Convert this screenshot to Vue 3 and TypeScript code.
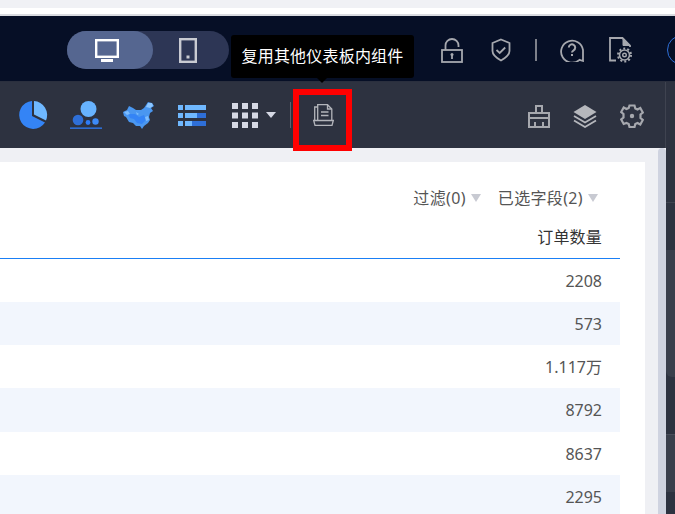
<script setup lang="ts">
const rows: string[] = ['2208', '573', '1.117万', '8792', '8637', '2295']
</script>

<template>
  <div class="page">
    <div class="strip"></div>
    <div class="white"></div>
    <div class="grey"></div>

    <header class="header">
      <div class="toggle">
        <div class="seg active">
          <svg width="24" height="23" viewBox="0 0 24 23"><rect x="1.2" y="1.2" width="21.6" height="16.6" fill="none" stroke="#fff" stroke-width="2.4"/><rect x="6" y="20" width="12" height="3" fill="#fff"/></svg>
        </div>
        <div class="seg">
          <svg width="18" height="25" viewBox="0 0 18 25"><rect x="1.2" y="1.2" width="15.6" height="22.6" fill="none" stroke="#c9cbd2" stroke-width="2.4"/><rect x="7.5" y="17.5" width="3" height="3" fill="#c9cbd2"/></svg>
        </div>
      </div>
      <div class="head-icons">
        <svg class="h-lock" width="22" height="25" viewBox="0 0 22 25" fill="none" stroke="#a6a8ae" stroke-width="1.8"><path d="M4.5 12V7.500a6.500 6.500 0 0 1 13 0V9"/><rect x="1" y="12" width="20" height="12"/><path d="M11 16v5" stroke-width="1.800"/><circle cx="11" cy="16.500" r="1.500" fill="#a6a8ae" stroke="none"/></svg>
        <svg class="h-shield" width="20" height="24" viewBox="0 0 20 24" fill="none" stroke="#a6a8ae" stroke-width="1.8"><path d="M10 1.500l8.500 3.500v8c0 4-4 7-8.500 9.500C5.500 20 1.500 17 1.500 13V5z"/><path d="M5.500 12l3.200 3 5.500-5.500"/></svg>
        <span class="h-div"></span>
        <svg class="h-help" width="24" height="24" viewBox="0 0 24 24" fill="none" stroke="#a6a8ae" stroke-width="1.8"><path d="M23 23l-3.500-1.200A11 11 0 1 1 23 12z"/><path d="M8.800 9.500a3.200 3.200 0 1 1 4.800 2.800c-1 .6-1.600 1-1.600 2.200" stroke-width="2"/><rect x="11" y="16" width="2" height="2" fill="#a6a8ae" stroke="none"/></svg>
        <svg class="h-doc" width="24" height="26" viewBox="0 0 24 26" fill="none" stroke="#a6a8ae" stroke-width="1.8"><path d="M7 23.500H1V1h12.500L21 8.500V10"/><path d="M14 2v6.500h6.500" fill="#a6a8ae" stroke-width="1"/><circle cx="15.500" cy="18" r="5" stroke-width="1.600"/><circle cx="15.500" cy="18" r="6.500" stroke-width="2" stroke-dasharray="2 2.080"/><circle cx="15.500" cy="18" r="1.800" stroke-width="1.400"/></svg>
      </div>
      <span class="avatar"></span>
    </header>

    <div class="toolbar">
      <svg class="t-pie" width="30" height="30" viewBox="0 0 30 30">
        <path d="M14 1A14 14 0 1 0 27 22.500L14 16z" fill="#3484f6"/>
        <path d="M16 1A14 14 0 0 1 28 20.500L16 14.500z" fill="#6fb8ff"/>
      </svg>
      <svg class="t-bubble" width="32" height="30" viewBox="0 0 32 30">
        <circle cx="18.500" cy="9" r="8" fill="#67b3ff"/>
        <circle cx="8" cy="20" r="5.300" fill="#2e6fd8"/>
        <circle cx="18" cy="22.500" r="2.400" fill="#2e7cf6"/>
        <circle cx="25.500" cy="21.500" r="3.200" fill="#3d8bf8"/>
        <rect x="0" y="27.500" width="32" height="1.300" fill="#2e7cf6"/>
      </svg>
      <svg class="t-map" width="32" height="27" viewBox="0 0 32 27">
        <path d="M0 10l4-2 2-4 4 2 3 2h5l3-2 2-3 2-3 4 1 2 3-3 2 2 3-3 2-1 4 1 3-2 3-4 3-2 3-2-3h-4l-3-3-4-1-3-5-2-1z" fill="#4a97f0"/>
        <path d="M5 12h7l4 3 5-2 2 5-4 4-5-1-3-4-4-1z" fill="#3484f6"/>
        <path d="M23 5l2-4 4 0 1 3-3 2z" fill="#8cc6ff"/>
        <path d="M1 10l4-1 2 3-3 1zM13 10l3 2-2 1zM22 15l3-1 1 4-3 1z" fill="#7dbdff"/>
      </svg>
      <svg class="t-list" width="28" height="21" viewBox="0 0 28 21">
        <rect x="0" y="0" width="5" height="5" fill="#6fb8ff"/><rect x="7" y="0" width="21" height="5" fill="#6fb8ff"/>
        <rect x="0" y="8" width="5" height="5" fill="#6fb8ff"/><rect x="7" y="8" width="21" height="5" fill="#2e6fd8"/><rect x="7" y="8" width="12" height="5" fill="#6fb8ff"/>
        <rect x="0" y="16" width="5" height="5" fill="#6fb8ff"/><rect x="7" y="16" width="21" height="5" fill="#2e6fd8"/><rect x="7" y="16" width="7" height="5" fill="#6fb8ff"/>
      </svg>
      <svg class="t-grid" width="26" height="25" viewBox="0 0 26 25" fill="#d5d8e4">
        <rect x="0" y="0" width="6" height="6"/><rect x="10" y="0" width="6" height="6"/><rect x="20" y="0" width="6" height="6"/>
        <rect x="0" y="9.500" width="6" height="6"/><rect x="10" y="9.500" width="6" height="6"/><rect x="20" y="9.500" width="6" height="6"/>
        <rect x="0" y="19" width="6" height="6"/><rect x="10" y="19" width="6" height="6"/><rect x="20" y="19" width="6" height="6"/>
      </svg>
      <span class="t-caret"></span>
      <span class="t-div"></span>
      <svg class="t-file" width="21" height="22" viewBox="0 0 21 22" fill="none" stroke="#b3b5bb" stroke-width="1.300">
        <path d="M1.700 16.500V3H4.700"/>
        <path d="M4.700 16.500V.7h9.800l4.300 4.300v11.500"/>
        <path d="M14.500 .7V5h4.300"/>
        <path d="M8 8h7.500M8 11.500h7.500"/>
        <path d="M.7 16.500h19.600l-1.300 4.800H2z"/>
      </svg>
      <div class="t-right">
        <svg width="22" height="23" viewBox="0 0 22 23" fill="none" stroke="#a6a8ae" stroke-width="2"><path d="M8 8V1h6v7"/><rect x="1" y="8" width="20" height="14"/><path d="M1 13h20M7 22v-5M15 22v-5"/></svg>
        <svg width="24" height="24" viewBox="0 0 24 24"><path d="M12 1l11.500 7L12 15 .5 8z" fill="#b5b7bc"/><path d="M1 12l11 6.500L23 12M1 16.500L12 23l11-6.500" fill="none" stroke="#b5b7bc" stroke-width="1.800"/></svg>
        <svg width="24" height="24" viewBox="0 0 24 24" fill="none" stroke="#a6a8ae" stroke-width="2.200"><path d="M9.500 1.500h5l.8 3 2.200 1 2.800-1.500 2.500 4.500-2.300 2v3.500l2.300 2-2.500 4.500-2.800-1.500-2.200 1-.8 3h-5l-.8-3-2.200-1L3.700 20 1.200 15.500l2.300-2V10l-2.300-2 2.500-4.500L6.500 5l2.200-1z"/><circle cx="12" cy="12" r="2.200" fill="#a6a8ae" stroke="none"/></svg>
      </div>
    </div>

    <main class="main">
      <section class="card">
        <div class="filters">
          <span class="filter">过滤(0)<i class="f-caret"></i></span>
          <span class="filter">已选字段(2)<i class="f-caret"></i></span>
        </div>
        <div class="table">
          <div class="th">订单数量</div>
          <div v-for="(v, i) in rows" :key="i" class="tr" :class="{ odd: i % 2 === 1 }">{{ v }}</div>
        </div>
      </section>
      <div class="gutter"><span class="scroll"></span></div>
      <aside class="side">
        <div class="s1"></div>
        <div class="s2"></div>
        <div class="s3"></div>
        <div class="s4"></div>
        <div class="s5"></div>
        <div class="s6"></div>
      </aside>
    </main>

    <div class="tooltip">复用其他仪表板内组件</div>
    <div class="highlight"></div>
  </div>
</template>

<style>
html, body { margin: 0; padding: 0; overflow: hidden; background: #eff0f4; }
</style>

<style scoped>
.page { position: relative; width: 675px; height: 514px; overflow: hidden; font-family: "Noto Sans", "Noto Sans CJK SC", sans-serif; background: #eff0f4; }
.strip { height: 8px; background: #f0f1f5; }
.white { height: 6px; background: #fff; }
.grey { height: 2px; background: #d9dbe0; }
.header { height: 66px; box-sizing: border-box; background: #060f26; border-bottom: 1px solid #2a2f3e; display: flex; align-items: center; padding-left: 67px; }
.toggle { width: 162px; height: 38px; border-radius: 19px; background: #2d3655; display: flex; margin-top: 3px; }
.seg { width: 76px; height: 38px; box-sizing: border-box; padding-right: 6px; border-radius: 19px; display: flex; align-items: center; justify-content: center; }
.seg.active { width: 86px; background: #556690; }
.head-icons { display: flex; align-items: center; margin-left: 212px; margin-top: 3px; }
.h-shield { margin-left: 28px; }
.h-div { width: 2px; height: 22px; background: #7d808a; margin-left: 24px; }
.h-help { margin-left: 23px; }
.h-doc { margin-left: 25px; }
.avatar { width: 30px; height: 30px; box-sizing: border-box; border: 1.5px solid #2e6fd8; border-radius: 50%; margin-left: 34px; margin-top: 3px; flex: none; }
.toolbar { height: 66px; box-sizing: border-box; background: #2d3240; display: flex; align-items: center; padding-left: 18px; position: relative; }
.toolbar::after { content: ""; position: absolute; left: 665px; top: 0; width: 1px; height: 66px; background: #3f4350; }
.t-bubble { margin-left: 22px; }
.t-map { margin-left: 21px; }
.t-list { margin-left: 23px; }
.t-grid { margin-left: 26px; }
.t-caret { width: 0; height: 0; border-left: 5px solid transparent; border-right: 5px solid transparent; border-top: 6px solid #d5d8e4; margin-left: 8px; }
.t-div { width: 1px; height: 26px; background: #5f636f; margin-left: 14px; }
.t-file { margin-left: 22px; }
.t-right { display: flex; align-items: center; gap: 23px; position: absolute; left: 528px; top: 22px; }
.main { display: flex; height: 366px; }
.card { width: 645px; height: 352px; margin-top: 14px; background: #fff; flex: none; }
.filters { height: 54px; box-sizing: border-box; padding: 24px 47px 0 0; display: flex; justify-content: flex-end; align-items: flex-start; gap: 17px; font-size: 16px; letter-spacing: .35px; line-height: 24px; color: #555; }
.filter { display: inline-flex; align-items: center; height: 24px; }
.f-caret { width: 0; height: 0; border-left: 5.5px solid transparent; border-right: 5.5px solid transparent; border-top: 8px solid #c8cad2; margin-left: 5px; }
.table { width: 620px; }
.th { height: 42px; border-bottom: 1px solid #1a7ff5; text-align: right; padding-right: 18px; font-size: 16px; letter-spacing: .2px; line-height: 42px; color: #333; }
.tr { height: 43.150px; line-height: 45px; text-align: right; padding-right: 18px; font-size: 16px; color: #555; background: #fff; }
.tr.odd { background: #f2f6fd; }
.gutter { width: 21px; flex: none; display: flex; justify-content: flex-end; }
.scroll { width: 8px; height: 366px; background: #cfd3e0; border-radius: 4px 4px 0 0; }
.side { width: 9px; flex: none; display: flex; flex-direction: column; background: #2d3240; }
.s1 { height: 54px; border-bottom: 1px solid #3f4350; }
.s2 { height: 47px; }
.s3 { height: 127px; background: #3a3f4c; border-bottom-left-radius: 6px; }
.s4 { height: 57px; border-bottom: 1px solid #4a4e5b; }
.s5 { height: 57px; background: #3a3f4c; }
.s6 { height: 22px; }
.tooltip { position: absolute; left: 231px; top: 35px; width: 183px; height: 43px; background: #000; border-radius: 3px; color: #fff; font-size: 16px; letter-spacing: .2px; line-height: 42px; text-align: center; }
.tooltip::after { content: ""; position: absolute; left: 86px; top: 43px; width: 0; height: 0; border-left: 5px solid transparent; border-right: 5px solid transparent; border-top: 5px solid #000; }
.highlight { position: absolute; left: 293px; top: 89px; width: 59px; height: 62px; box-sizing: border-box; border: 6px solid #f00; }
</style>
